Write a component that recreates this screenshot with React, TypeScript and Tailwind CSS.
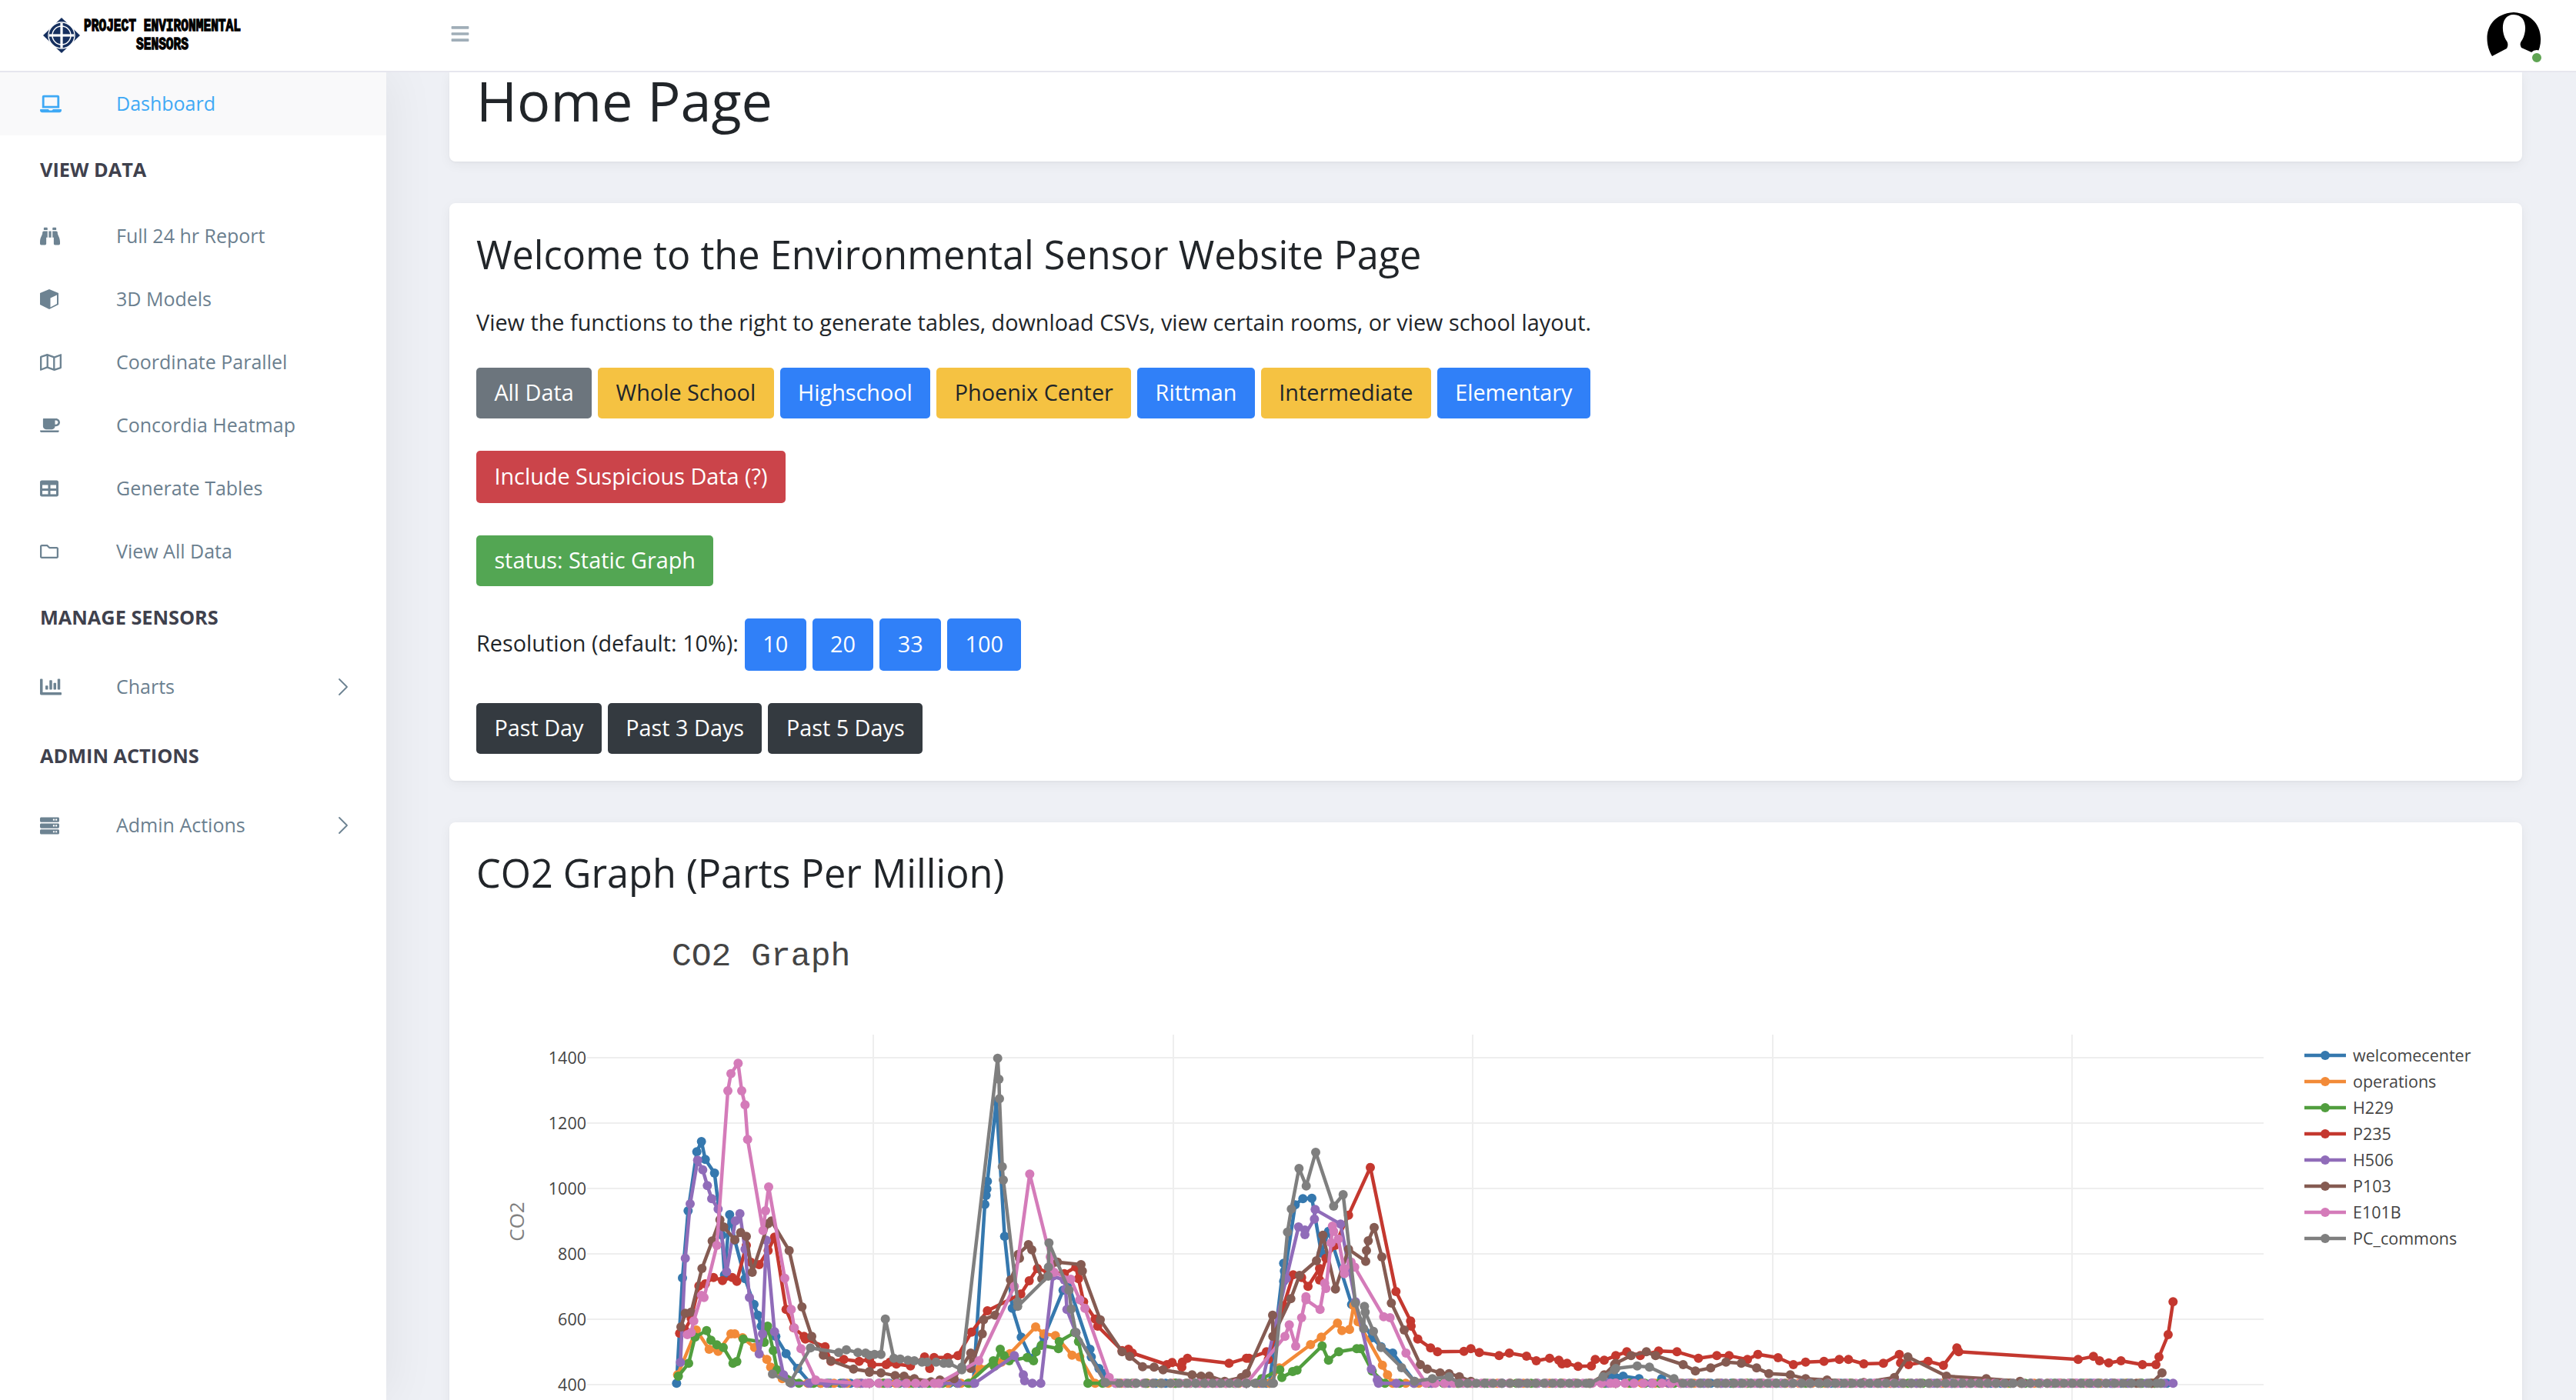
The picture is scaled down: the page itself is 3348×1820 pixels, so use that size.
import React from 'react';
import { ChevronRight } from 'lucide-react';
import {
  FaBars,
  FaBinoculars,
  FaChartBar,
  FaCoffee,
  FaLaptop,
  FaRegFolder,
  FaRegMap,
  FaServer,
  FaTable,
} from 'react-icons/fa';

const BASE = 1438;

// points read off the graph in four horizontal pieces: [left, x scale, points]
type Piece = [number, number, string];
const A = (s: string): Piece => [640, 3, s];
const B = (s: string): Piece => [1130, 3, s];
const C = (s: string): Piece => [1620, 3, s];
const D = (s: string): Piece => [2100, 1.2564, s];

const series: { name: string; color: string; step: number; pieces: Piece[] }[] = [
  {
    name: 'welcomecenter',
    color: '#3578ae',
    step: 13,
    pieces: [
      A('718,1438 741,1027 763,765 797,535 815,495 830,565 866,618 895,860 905,1015 925,780 945,880 985,1030 1020,1130 1035,1172 1048,1215 1105,1255 1145,1322 1190,1380 1240,1438 1470,1438'),
      B('0,1438 405,1438 450,740 455,705 458,680 460,650 495,340 527,865 557,1145 592,1258 630,1340 680,1258 755,1075 775,1050 860,1305 865,1335 895,1380 915,1400 960,1438 1470,1438'),
      C('0,1438 90,1438 145,970 148,1000 145,1040 190,742 220,718 255,716 292,930 320,845 410,1130 490,1260 525,1295 570,1320 655,1430 1400,1438 1425,1415'),
      D('0,1415 12,1410 38,1420 60,1438 75,1420 90,1438 900,1438'),
    ],
  },
  {
    name: 'operations',
    color: '#f28a38',
    step: 17,
    pieces: [
      A('722,1405 795,1230 845,1305 880,1313 930,1245 945,1245 975,1260 1022,1298 1070,1345 1085,1375 1130,1420 1230,1438 1470,1438'),
      B('0,1438 390,1438 430,1380 515,1355 548,1322 648,1218 680,1245 725,1252 790,1328 820,1335 880,1438 1470,1438'),
      C('0,1438 90,1438 128,1378 250,1287 292,1258 355,1203 372,1232 402,1228 418,1135 435,1198 530,1367 550,1405 570,1438 1440,1438'),
      D('0,1438 880,1438'),
    ],
  },
  {
    name: 'H229',
    color: '#519e3e',
    step: 19,
    pieces: [
      A('725,1410 765,1360 790,1258 835,1232 852,1270 875,1288 900,1298 938,1360 953,1353 978,1265 1060,1278 1073,1215 1095,1310 1110,1385 1195,1438 1470,1438'),
      B('0,1438 385,1438 483,1350 487,1372 510,1305 525,1330 545,1350 615,1337 640,1350 650,1315 670,1290 737,1303 740,1275 800,1240 815,1275 852,1438 1470,1438'),
      C('0,1438 60,1420 130,1385 138,1415 180,1392 197,1387 295,1292 320,1348 360,1315 430,1303 445,1303 490,1390 540,1438 1440,1438'),
      D('0,1438 880,1438'),
    ],
  },
  {
    name: 'P235',
    color: '#c4382f',
    step: 20,
    pieces: [
      A('730,1243 750,1230 775,1185 805,1058 830,1050 862,1025 897,1037 935,1025 953,1040 990,900 1007,965 1040,975 1075,920 1100,868 1145,1150 1175,1222 1215,1255 1220,1265 1297,1295 1320,1352 1370,1345 1430,1352 1470,1345'),
      B('0,1345 10,1365 65,1365 80,1355 105,1363 160,1370 215,1335 235,1380 252,1337 305,1337 345,1330 398,1238 460,1155 590,1090 623,1038 655,990 697,1005 760,1010 805,985 815,1030 835,1120 880,1187 890,1215 985,1310 1010,1305 1025,1320 1160,1365 1180,1357 1218,1375 1220,1355 1240,1340 1402,1360 1470,1340'),
      C('10,1340 78,1315 85,1345 145,1135 182,1015 215,1025 240,1060 285,990 285,1035 310,950 345,900 398,782 483,596 583,1080 640,1195 642,1215 668,1265 718,1300 745,1315 848,1313 875,1303 908,1318 985,1330 1025,1320 1092,1332 1130,1350 1182,1340 1218,1348 1230,1362 1250,1360 1293,1372 1345,1370 1360,1345 1395,1348'),
      D('0,1330 18,1315 40,1330 70,1312 100,1315 135,1340 165,1330 185,1330 215,1345 232,1325 265,1338 290,1365 310,1355 340,1352 365,1345 380,1345 405,1362 437,1360 463,1325 465,1358 478,1365 510,1352 535,1368 557,1300 560,1315 755,1345 780,1333 790,1350 805,1358 825,1350 860,1365 882,1365 887,1335 902,1248 910,1120'),
    ],
  },
  {
    name: 'H506',
    color: '#906cb9',
    step: 23,
    pieces: [
      A('733,1356 752,950 771,738 800,568 820,605 838,667 855,718 880,758 913,1003 947,805 965,776 985,915 1002,1103 1040,1323 1053,1245 1068,880 1100,1237 1135,1405 1165,1438 1470,1438'),
      B('0,1438 410,1438 565,1330 600,1405 605,1428 635,1438 668,1438 715,1020 760,1035 765,1070 770,1150 805,1240 920,1435 1470,1438'),
      C('0,1438 60,1438 155,1030 203,828 228,840 228,858 265,797 268,760 367,817 425,1120 487,1382 510,1425 515,1438 1440,1438'),
      D('0,1438 910,1438'),
    ],
  },
  {
    name: 'P103',
    color: '#855b52',
    step: 26,
    pieces: [
      A('735,1218 752,1165 775,1160 817,990 857,883 887,800 902,828 945,878 968,850 990,865 1013,1005 1075,815 1088,805 1157,920 1207,1140 1245,1255 1290,1328 1320,1350 1408,1382 1470,1392'),
      B('0,1395 45,1397 100,1408 135,1410 175,1420 240,1432 275,1425 330,1420 395,1320 395,1380 440,1245 445,1190 490,1172 550,1035 585,950 580,935 620,897 633,917 672,1030 733,965 825,975 830,1000 900,1190 985,1315 1015,1333 1065,1373 1110,1375 1145,1385 1258,1405 1293,1410 1325,1410 1385,1430 1450,1415'),
      C('0,1400 102,1172 103,1255 173,1108 207,1017 273,960 298,860 347,1070 398,915 465,962 468,920 475,882 498,830 528,945 565,1125 615,1230 678,1365 705,1382 755,1397 790,1400 830,1412 875,1430 1340,1438 1395,1405 1435,1365'),
      D('0,1360 25,1330 50,1315 65,1330 110,1365 130,1390 155,1378 180,1355 205,1360 230,1378 250,1400 285,1405 310,1420 345,1425 405,1435 455,1415 477,1335 540,1410 605,1420 660,1430 850,1438 875,1438 892,1397'),
    ],
  },
  {
    name: 'E101B',
    color: '#d47bb9',
    step: 12,
    pieces: [
      A('760,1248 775,1240 785,1195 815,1095 825,1103 875,900 918,297 930,230 958,190 972,297 985,352 995,487 1055,842 1065,765 1077,672 1140,1028 1165,1150 1177,1222 1203,1303 1260,1425 1420,1438 1470,1438'),
      B('0,1438 270,1438 427,1350 565,1060 625,622 705,945 720,1005 785,1032 820,1112 840,1145 935,1415 960,1438 1470,1438'),
      C('0,1438 150,1255 167,1210 192,1293 215,1182 232,1100 232,1112 287,1150 305,1048 310,1068 330,890 335,825 340,845 358,875 380,990 382,1010 408,965 422,985 535,1178 560,1182 622,1320 700,1438 1440,1438'),
      D('0,1438 820,1438'),
    ],
  },
  {
    name: 'PC_commons',
    color: '#7f7f7f',
    step: 11,
    pieces: [
      A('1092,1402 1160,1435 1240,1300 1350,1318 1380,1307 1425,1318 1455,1320'),
      B('0,1328 20,1325 45,1325 62,1187 95,1340 120,1343 150,1348 175,1350 205,1355 225,1355 260,1355 290,1360 310,1360 360,1385 360,1375 500,170 505,252 507,328 518,593 522,645 578,1120 578,1138 697,1020 698,985 700,890 778,1075 787,1148 805,1240 920,1435 975,1438 1470,1438'),
      C('0,1438 105,1438 160,848 175,758 205,600 233,668 270,537 340,747 377,702 425,1125 457,1225 460,1138 463,1160 495,1235 525,1298 605,1377 655,1430 725,1420 790,1412 830,1438 1340,1438 1390,1412 1435,1385'),
      D('0,1380 35,1370 55,1375 95,1420 110,1438 890,1438'),
    ],
  },
];

function toPoints(pieces: Piece[], step: number) {
  const pts: [number, number][] = [];
  pieces.forEach(([left, scale, text]) => {
    text.split(' ').forEach((pair) => {
      const [x, y] = pair.split(',').map(Number);
      const px = left + x / scale;
      const py = 1320 + y / 3;
      const prev = pts[pts.length - 1];
      // long runs at the 400 floor hold many samples
      if (prev && y === BASE && Math.abs(prev[1] - py) < 1 && px - prev[0] > step) {
        for (let v = prev[0] + step; v < px; v += step) pts.push([v, py]);
      }
      pts.push([px, py]);
    });
  });
  return pts;
}

const ticks = [1400, 1200, 1000, 800, 600, 400];
const vLines = [1135, 1525, 1914, 2304, 2693];

function Co2Chart() {
  return (
    <svg viewBox="619 1166 2640 660" width={2640} height={660} className="block">
      <text x={873} y={1256} fontFamily="'Liberation Mono', monospace" fontSize={43} fill="#444">
        CO2 Graph
      </text>
      {vLines.map((x) => (
        <line key={x} x1={x} x2={x} y1={1346} y2={1827} stroke="#eeeeee" strokeWidth={2} />
      ))}
      {ticks.map((t, i) => (
        <g key={t}>
          <line x1={763} x2={2942} y1={1376 + i * 85} y2={1376 + i * 85} stroke="#eeeeee" strokeWidth={2} />
          <text x={762} y={1384 + i * 85} textAnchor="end" fontSize={21.5} fill="#444" fontFamily="'Open Sans', sans-serif">
            {t}
          </text>
        </g>
      ))}
      <text
        x={0}
        y={0}
        transform="translate(681 1589) rotate(-90)"
        textAnchor="middle"
        fontSize={26}
        fill="#808080"
        fontFamily="'Open Sans', sans-serif"
      >
        CO2
      </text>
      {series.map((s) => {
        const pts = toPoints(s.pieces, s.step);
        return (
          <g key={s.name}>
            <polyline points={pts.map((p) => p.join(',')).join(' ')} fill="none" stroke={s.color} strokeWidth={4.5} strokeLinejoin="round" />
            {pts.map((p, i) => (
              <circle key={i} cx={p[0]} cy={p[1]} r={6} fill={s.color} />
            ))}
          </g>
        );
      })}
      {series.map((s, i) => (
        <g key={s.name}>
          <line x1={2995} x2={3049} y1={1373 + i * 34} y2={1373 + i * 34} stroke={s.color} strokeWidth={4.5} />
          <circle cx={3022} cy={1373 + i * 34} r={6} fill={s.color} />
          <text x={3058} y={1381 + i * 34} fontSize={21.5} fill="#444" fontFamily="'Open Sans', sans-serif">
            {s.name}
          </text>
        </g>
      ))}
    </svg>
  );
}

function Logo() {
  return (
    <div className="flex items-center pl-[56px] w-[502px]">
      <svg width="48" height="46" viewBox="0 0 48 46" className="shrink-0">
        <polygon points="24,0 48,23 24,46 0,23" fill="#16305f" />
        <circle cx="24" cy="23" r="17" fill="none" stroke="#fff" strokeWidth="1.4" />
        <circle cx="24" cy="23" r="12" fill="#16305f" stroke="#fff" strokeWidth="1.4" />
        <rect x="22.4" y="7" width="3.2" height="32" fill="#fff" />
        <rect x="8" y="21.4" width="32" height="3.2" fill="#fff" />
      </svg>
      <div className="ml-[5px] w-[204px] text-center text-black font-bold text-[16.2px] leading-[16.5px] scale-y-[1.4] [font-family:'Liberation_Mono',monospace] [-webkit-text-stroke:1px_black] whitespace-nowrap">
        <div>PROJECT ENVIRONMENTAL</div>
        <div>SENSORS</div>
      </div>
    </div>
  );
}

function Avatar() {
  return (
    <div className="relative w-[73px] h-[60px] mr-[44px]">
      <svg width="73" height="60" viewBox="0 0 73 60">
        <path d="M8 57 C-4 38 -2 3 36 0 C74 3 76 38 66 55 L46 46 C44 42 44 40 47 36 C54 24 53 3 36 3 C20 3 19 24 26 36 C29 40 29 43 27 47 Z" fill="#000" />
      </svg>
      <div className="absolute right-[-3px] bottom-[-9px] w-[20px] h-[20px] rounded-full bg-[#5fa453] border-[4px] border-white" />
    </div>
  );
}

function CubeIcon() {
  return (
    <svg width="24" height="26" viewBox="0 0 24 26">
      <polygon points="12,0 24,5 24,20 12,26 0,20 0,5" fill="#6d8392" />
      <polygon points="13.5,11.5 22,7.5 22,19 13.5,23.5" fill="#fff" />
    </svg>
  );
}

function MenuItem({ icon, label, arrow }: { icon: React.ReactNode; label: string; arrow?: boolean }) {
  return (
    <div className={`flex items-center pl-[52px] text-[#6b7f8f] ${arrow ? 'h-[90px]' : 'h-[82px]'}`}>
      <span className="w-[99px] flex items-center text-[#6d8392]">{icon}</span>
      <span className="flex-1">{label}</span>
      {arrow && <ChevronRight size={40} strokeWidth={1.1} className="mr-[36px] text-[#6d8392]" />}
    </div>
  );
}

function MenuHeading({ children }: { children: React.ReactNode }) {
  return <div className="h-[90px] flex items-center pl-[52px] font-bold text-[#3f414d] text-[25.3px]">{children}</div>;
}

function Btn({ color, tall, children }: { color: string; tall?: boolean; children: React.ReactNode }) {
  return (
    <button className={`px-[23.4px] pb-[2px] rounded-[5px] text-[28.8px] leading-none whitespace-nowrap ${tall ? 'h-[68px]' : 'h-[66px]'} ${color}`}>
      {children}
    </button>
  );
}

const BLUE = 'bg-[#3080f8] text-white';
const YELLOW = 'bg-[#f5c242] text-[#212529]';
const DARK = 'bg-[#343a40] text-white';

const cardClass =
  'bg-white rounded-[8px] shadow-[0_4px_16px_rgba(4,9,20,0.05),0_1px_3px_rgba(4,9,20,0.04)] px-[35px]';

export default function App() {
  return (
    <div className="h-screen overflow-hidden flex flex-col bg-[#eef0f5] text-[#212529] [font-family:'Open_Sans',sans-serif]">
      <header className="h-[94px] shrink-0 bg-white border-b-2 border-[#e6e6ee] flex items-center relative z-10">
        <Logo />
        <FaBars size={26} className="ml-[83px] -mt-[4px] text-[#a0aeb8]" />
        <div className="flex-1" />
        <Avatar />
      </header>

      <div className="flex-1 flex min-h-0">
        <aside className="w-[502px] shrink-0 bg-white text-[25px] shadow-[7px_0_60px_rgba(0,0,0,0.06)] relative">
          <div className="h-[82px] bg-[#f9f9fa] flex items-center pl-[52px] text-[#3fa9f5]">
            <span className="w-[99px] flex items-center">
              <FaLaptop size={28} />
            </span>
            Dashboard
          </div>
          <MenuHeading>VIEW DATA</MenuHeading>
          <MenuItem icon={<FaBinoculars size={26} />} label="Full 24 hr Report" />
          <MenuItem icon={<CubeIcon />} label="3D Models" />
          <MenuItem icon={<FaRegMap size={28} />} label="Coordinate Parallel" />
          <MenuItem icon={<FaCoffee size={26} />} label="Concordia Heatmap" />
          <MenuItem icon={<FaTable size={24} />} label="Generate Tables" />
          <MenuItem icon={<FaRegFolder size={24} />} label="View All Data" />
          <MenuHeading>MANAGE SENSORS</MenuHeading>
          <MenuItem icon={<FaChartBar size={28} />} label="Charts" arrow />
          <MenuHeading>ADMIN ACTIONS</MenuHeading>
          <MenuItem icon={<FaServer size={25} />} label="Admin Actions" arrow />
        </aside>

        <main className="flex-1 min-w-0 pl-[82px] pr-[70px]">
          <section className={`${cardClass} h-[116px] rounded-t-none`}>
            <h1 className="text-[72px] leading-[73px]">Home Page</h1>
          </section>

          <section className={`${cardClass} mt-[54px] h-[751px] pt-[37px]`}>
            <h2 className="text-[50.4px] leading-[60px]">Welcome to the Environmental Sensor Website Page</h2>
            <p className="mt-[38px] text-[28.8px] leading-[40px]">
              View the functions to the right to generate tables, download CSVs, view certain rooms, or view school layout.
            </p>
            <div className="mt-[39px] flex gap-[8px]">
              <Btn color="bg-[#6c757d] text-white">All Data</Btn>
              <Btn color={YELLOW}>Whole School</Btn>
              <Btn color={BLUE}>Highschool</Btn>
              <Btn color={YELLOW}>Phoenix Center</Btn>
              <Btn color={BLUE}>Rittman</Btn>
              <Btn color={YELLOW}>Intermediate</Btn>
              <Btn color={BLUE}>Elementary</Btn>
            </div>
            <div className="mt-[42px] flex">
              <Btn color="bg-[#cb444a] text-white" tall>
                Include Suspicious Data (?)
              </Btn>
            </div>
            <div className="mt-[42px] flex">
              <Btn color="bg-[#53a653] text-white">status: Static Graph</Btn>
            </div>
            <div className="mt-[42px] flex items-center gap-[8px] text-[28.8px]">
              <span className="pb-[5px]">Resolution (default: 10%):</span>
              <Btn color={BLUE} tall>10</Btn>
              <Btn color={BLUE} tall>20</Btn>
              <Btn color={BLUE} tall>33</Btn>
              <Btn color={BLUE} tall>100</Btn>
            </div>
            <div className="mt-[42px] flex gap-[8px]">
              <Btn color={DARK}>Past Day</Btn>
              <Btn color={DARK}>Past 3 Days</Btn>
              <Btn color={DARK}>Past 5 Days</Btn>
            </div>
          </section>

          <section className={`${cardClass} mt-[54px] pt-[36px] pb-[40px]`}>
            <h2 className="text-[50.4px] leading-[60px]">CO2 Graph (Parts Per Million)</h2>
            <Co2Chart />
          </section>
        </main>
      </div>
    </div>
  );
}
